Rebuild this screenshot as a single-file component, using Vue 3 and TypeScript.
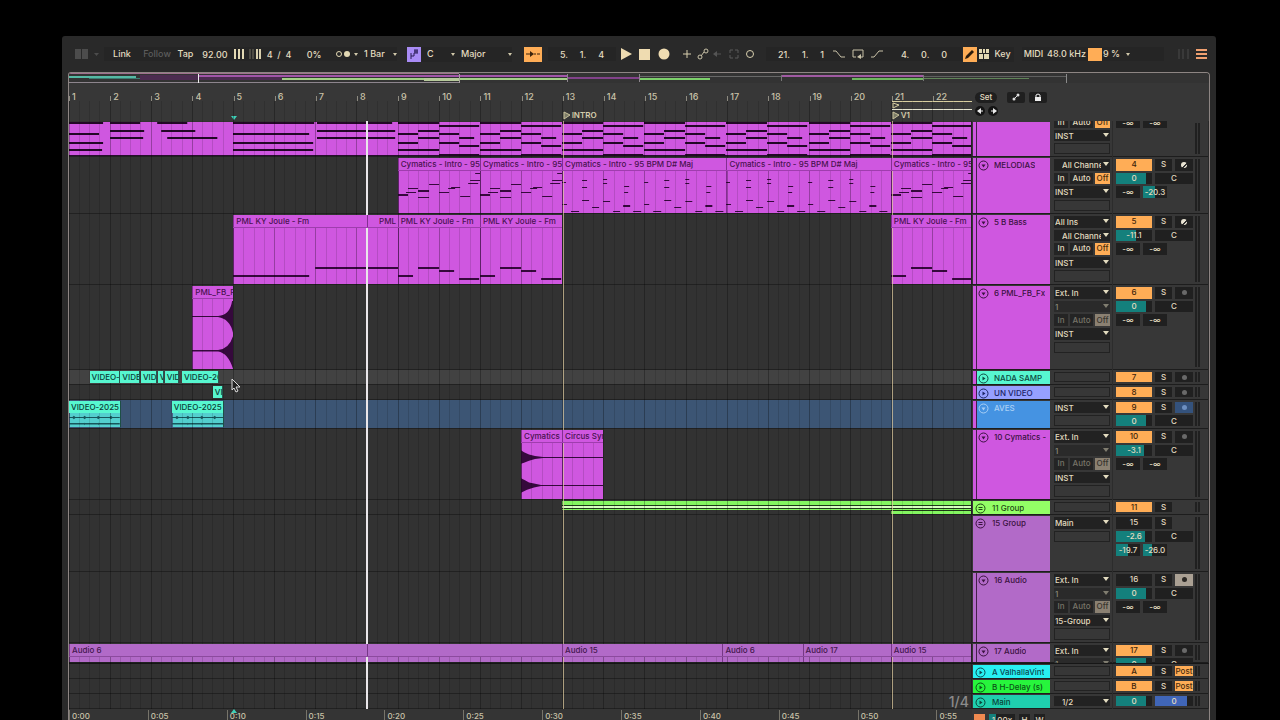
<script setup lang="ts">
type Note = [number, number, number, number?]
interface Clip { s: number; e: number; label?: string; kind?: string; notes?: Note[]; art?: string }
interface Slot { k: 'sel' | 'mon' | 'box'; t?: string; dim?: boolean; indent?: boolean }
interface Level { t: string; fill: number }
interface Track {
  name: string; slots: number; color: string; nested?: boolean; open?: string; tone?: string
  io: Slot[]; num: string; off?: boolean; rec?: string; vol?: Level; pan?: string; sends?: Level[]
  clips: Clip[]; lane?: string; cut?: string
}

const BARS = 21.95
const BAR_W = 41
const at = (bar: number): string => `${((bar - 1) / BARS) * 100}%`
const span = (bars: number): string => `${(bars / BARS) * 100}%`
const inClip = (x: number, c: Clip): string => `${(x / ((c.e - c.s) * BAR_W)) * 100}%`

const chord: Note[] = [
  [0, 41, 0], [0, 20, 11], [20, 41, 8], [0, 20, 20], [20, 41, 15], [0, 41, 27],
  [41, 81, 3], [41, 61, 11], [61, 76, 15], [41, 61, 20], [61, 81, 23], [41, 81, 32, 3]
]
const shift = (n: Note[], dx: number): Note[] => n.map(([a, b, y, h]) => [a + dx, b + dx, y, h])
const arp: Note[] = [
  [0, 10, 36], [8, 18, 34, 1], [10, 20, 30, 1], [20, 31, 32], [20, 31, 39, 1], [31, 41, 26, 1], [41, 51, 34, 1],
  [50, 57, 30, 1], [53, 62, 29, 1], [62, 72, 38, 1], [72, 82, 22, 1], [70, 80, 25, 1], [77, 82, 15, 1]
]
const pluckHalf: Note[] = [
  [0, 4, 24, 1], [0, 5, 46, 1], [9, 17, 53, 1], [20, 25, 22, 1], [20, 25, 29, 1], [20, 27, 42, 1], [30, 37, 49, 1],
  [41, 45, 21, 1], [41, 45, 25, 1], [41, 48, 43, 1], [51, 58, 53, 1], [61, 68, 47], [62, 66, 34, 1], [62, 67, 28, 1], [71, 79, 53, 1]
]
const pluck: Note[] = [...pluckHalf, ...shift(pluckHalf, 82)]
const bass: Note[] = [[0, 15, 60], [20, 41, 52], [41, 56, 55], [61, 81, 63]]

const sel = (t: string, dim = false, indent = false): Slot => ({ k: 'sel', t, dim, indent })
const mon = (dim = false): Slot => ({ k: 'mon', dim })
const box: Slot = { k: 'box' }
const inf: Level = { t: '-∞', fill: 0 }
const zero: Level = { t: '0', fill: 84 }

const tracks: Track[] = [
  {
    name: '', slots: 3, color: 'magenta', nested: true, cut: 'top', io: [mon(), sel('INST'), box],
    num: '', rec: 'main', sends: [inf, inf],
    clips: [
      { s: 1, e: 5, kind: 'bare', notes: [[0, 34, 0], [0, 30, 11], [0, 34, 20], [0, 33, 27], [41, 71, 0], [88, 118, 0], [41, 75, 8], [41, 74, 15], [92, 126, 8], [98, 148, 15]] },
      { s: 5, e: 7, kind: 'bare', notes: [[0, 81, 0], [0, 76, 11], [0, 80, 20], [0, 80, 27]] },
      { s: 7, e: 9, kind: 'bare', notes: [[1, 76, 0], [1, 79, 8], [1, 79, 15]] },
      ...[9, 11, 13, 15, 17, 19, 21].map((s): Clip => ({ s, e: s + 2, kind: 'bare', notes: chord }))
    ]
  },
  {
    name: 'MELODIAS', slots: 4, color: 'magenta', nested: true, open: 'down', io: [sel('All Channels', false, true), mon(), sel('INST'), box],
    num: '4', rec: 'midi', vol: zero, pan: 'C', sends: [inf, { t: '-20.3', fill: 48 }],
    clips: [
      { s: 9, e: 11, label: 'Cymatics - Intro - 95 BPM D# Maj', notes: arp },
      { s: 11, e: 13, label: 'Cymatics - Intro - 95 BPM D# Maj', notes: arp },
      { s: 13, e: 17, label: 'Cymatics - Intro - 95 BPM D# Maj', notes: pluck },
      { s: 17, e: 21, label: 'Cymatics - Intro - 95 BPM D# Maj', notes: pluck },
      { s: 21, e: 23, label: 'Cymatics - Intro - 95 BPM D# Maj', notes: arp }
    ]
  },
  {
    name: '5 B Bass', slots: 5, color: 'magenta', nested: true, open: 'down', io: [sel('All Ins'), sel('All Channels', false, true), mon(), sel('INST'), box],
    num: '5', rec: 'midi', vol: { t: '-11.1', fill: 56 }, pan: 'C', sends: [inf, inf],
    clips: [
      { s: 5, e: 8.25, label: 'PML KY Joule - Fm', notes: [[0, 76, 60], [82, 134, 52]] },
      { s: 8.25, e: 8.52, label: '', notes: [[0, 11, 52]] },
      { s: 8.52, e: 9, label: 'PML KY', kind: 'joined', notes: [[0, 20, 52]] },
      { s: 9, e: 11, label: 'PML KY Joule - Fm', notes: bass },
      { s: 11, e: 13, label: 'PML KY Joule - Fm', notes: bass },
      { s: 21, e: 23, label: 'PML KY Joule - Fm', notes: bass }
    ]
  },
  {
    name: '6 PML_FB_Fx', slots: 6, color: 'magenta', nested: true, open: 'down', io: [sel('Ext. In'), sel('1', true), mon(true), sel('INST'), box],
    num: '6', rec: 'dot', vol: zero, pan: 'C', sends: [inf, inf],
    clips: [{ s: 4, e: 5, label: 'PML_FB_Fx', art: 'swell' }]
  },
  {
    name: 'NADA SAMP', slots: 1, color: 'mint', nested: true, open: 'right', io: [box], num: '7', rec: 'dot', lane: 'hover',
    clips: [
      { s: 1.5, e: 2.23, label: 'VIDEO-2025', kind: 'mint' }, { s: 2.25, e: 2.73, label: 'VIDEO-2025', kind: 'mint' },
      { s: 2.75, e: 3.14, label: 'VIDEO-2025', kind: 'mint' }, { s: 3.16, e: 3.31, label: 'VIDEO', kind: 'mint' },
      { s: 3.33, e: 3.68, label: 'VIDEO', kind: 'mint' }, { s: 3.75, e: 4.64, label: 'VIDEO-2025', kind: 'mint' }
    ]
  },
  {
    name: 'UN VIDEO', slots: 1, color: 'peri', nested: true, open: 'right', io: [box], num: '8', rec: 'dot',
    clips: [{ s: 4.5, e: 4.75, label: 'VIDEO', kind: 'mint' }]
  },
  {
    name: 'AVES', slots: 2, color: 'blue', nested: true, open: 'down', tone: 'pale', io: [sel('INST'), box], num: '9', rec: 'armed',
    vol: zero, pan: 'C', lane: 'picked',
    clips: [
      { s: 1, e: 2.26, label: 'VIDEO-2025', kind: 'mint', art: 'beats' },
      { s: 3.5, e: 4.78, label: 'VIDEO-2025', kind: 'mint', art: 'beats' }
    ]
  },
  {
    name: '10 Cymatics -', slots: 5, color: 'magenta', nested: true, open: 'down', io: [sel('Ext. In'), sel('1', true), mon(true), sel('INST'), box],
    num: '10', rec: 'dot', vol: { t: '-3.1', fill: 78 }, pan: 'C', sends: [inf, inf],
    clips: [{ s: 12, e: 13, label: 'Cymatics', art: 'hit' }, { s: 13, e: 14, label: 'Circus Synth', art: 'tail' }]
  },
  {
    name: '11 Group', slots: 1, color: 'green', open: 'group', io: [box], num: '11', rec: 'none',
    clips: [{ s: 13, e: 21, kind: 'stack' }, { s: 21, e: 23, kind: 'stack tall' }]
  },
  {
    name: '15 Group', slots: 4, color: 'violet', open: 'group', io: [sel('Main'), box], num: '15', off: true, rec: 'none',
    vol: { t: '-2.6', fill: 80 }, pan: 'C', sends: [{ t: '-19.7', fill: 48 }, { t: '-26.0', fill: 36 }], clips: []
  },
  {
    name: '16 Audio', slots: 5, color: 'violet', nested: true, open: 'down', io: [sel('Ext. In'), sel('1', true), mon(true), sel('15-Group'), box],
    num: '16', off: true, rec: 'lit', vol: zero, pan: 'C', sends: [inf, inf], clips: []
  },
  {
    name: '17 Audio', slots: 2, color: 'violet', nested: true, open: 'down', cut: 'bottom', io: [sel('Ext. In'), sel('1', true)],
    num: '17', rec: 'dot', vol: zero, pan: 'C',
    clips: [
      { s: 1, e: 8.25, label: 'Audio 6', kind: 'violet' }, { s: 8.25, e: 13, label: '', kind: 'violet' },
      { s: 13, e: 16.9, label: 'Audio 15', kind: 'violet' }, { s: 16.9, e: 18.85, label: 'Audio 6', kind: 'violet' },
      { s: 18.85, e: 21, label: 'Audio 17', kind: 'violet' }, { s: 21, e: 23, label: 'Audio 15', kind: 'violet' }
    ]
  }
]

const returns: Track[] = [
  { name: 'A ValhallaVint', slots: 1, color: 'cyan', open: 'right', io: [box], num: 'A', rec: 'post', clips: [] },
  { name: 'B H-Delay (s)', slots: 1, color: 'lime', open: 'right', io: [box], num: 'B', rec: 'post', clips: [] },
  { name: 'Main', slots: 1, color: 'teal', open: 'right', io: [sel('1/2', false, true)], num: '', rec: 'main', vol: zero, clips: [] }
]
const sections = [{ id: 'tracks', rows: tracks }, { id: 'returns', rows: returns }]

const rowHeight = (t: Track): string => `${t.cut === 'top' ? 36 : t.cut === 'bottom' ? 20 : t.slots * 14 + 1}px`
const bars = Array.from({ length: 22 }, (_, i) => i + 1)
const beats = Array.from({ length: 88 }, (_, i) => 1 + i / 4)
const times = Array.from({ length: 12 }, (_, i) => ({ t: `0:${String(i * 5).padStart(2, '0')}`, bar: 1 + i * 1.917 }))
const locators = [{ bar: 13, name: 'INTRO' }, { bar: 21, name: 'V1' }]
const overview: { x: number; w: number; y: number; h: number; c: string }[] = [
  { x: 0, w: 390, y: 0, h: 1, c: '#a0708f' }, { x: 0, w: 67, y: 3, h: 2, c: '#55b9a4' }, { x: 20, w: 60, y: 5, h: 1, c: '#3c7d72' },
  { x: 71, w: 142, y: 2, h: 5, c: '#4c2c50' }, { x: 130, w: 368, y: 2, h: 2, c: '#a154a8' }, { x: 213, w: 286, y: 5, h: 2, c: '#a3cf87' },
  { x: 498, w: 72, y: 4, h: 2, c: '#82428a' }, { x: 355, w: 36, y: 5, h: 3, c: '#b7c99b' }, { x: 570, w: 71, y: 5, h: 2, c: '#7ccf6a' },
  { x: 570, w: 142, y: 3, h: 1, c: '#686868' }, { x: 712, w: 142, y: 2, h: 2, c: '#a05aa2' }, { x: 783, w: 72, y: 5, h: 2, c: '#6eb75f' },
  { x: 855, w: 105, y: 5, h: 1, c: '#608458' }, { x: 855, w: 142, y: 3, h: 1, c: '#5f5f5f' }, { x: 570, w: 1, y: 1, h: 8, c: '#8d858d' },
  { x: 498, w: 1, y: 1, h: 8, c: '#8d858d' }, { x: 712, w: 1, y: 2, h: 6, c: '#777' }, { x: 854, w: 1, y: 2, h: 6, c: '#777' },
  { x: 997, w: 1, y: 1, h: 9, c: '#8a8a8a' }, { x: 0, w: 391, y: 9, h: 1, c: '#8d858d' }, { x: 390, w: 1, y: 1, h: 9, c: '#a9a2a0' },
  { x: 129, w: 1, y: 1, h: 9, c: '#eee' }
]
</script>

<template>
  <main class="window">
    <header class="toolbar">
      <button class="cell w34 dimmed" aria-label="Browser">
        <svg width="28" height="12"><path d="M2 1h6v10H2zM9 1h6v10H9z" fill="#4c4c4c" /><path d="M21 5h5l-2.500 3z" fill="#4c4c4c" /></svg>
      </button>
      <div class="group">
        <button class="cell w36">Link</button>
        <button class="cell w34 dimmed">Follow</button>
        <button class="cell w22">Tap</button>
        <input class="cell w36" value="92.00" aria-label="Tempo" />
        <button class="cell w28" aria-label="Nudge">
          <svg width="28" height="10"><path d="M2 0v10M6 0v10M10 0v10" stroke="#e3d9b4" stroke-width="2" /><path d="M17 0v10M20 0v10" stroke="#777362" /><path d="M24 0v10M27 0v10" stroke="#d8cfae" stroke-width="2" /></svg>
        </button>
        <input class="cell w36" value="4  /  4" aria-label="Time signature" />
        <input class="cell w34" value="0%" aria-label="Groove amount" />
        <button class="cell w22" aria-label="Metronome">
          <svg width="16" height="8"><circle cx="4" cy="4" r="2.500" fill="none" stroke="#e3d9b4" /><circle cx="12" cy="4" r="3" fill="#e3d9b4" /></svg>
        </button>
        <i class="caret"></i>
        <select class="cell pick w35" aria-label="Quantization"><option>1 Bar</option></select>
        <i class="caret"></i>
      </div>
      <div class="group scale">
        <button class="cell tile purple" aria-label="Scale">
          <svg width="12" height="12"><path d="M3 11V5M3 8h3V5" stroke="#2a1d55" fill="none" /><path d="M6 3h4M7 1v4M9 1v4M6 5h4" stroke="#2a1d55" fill="none" /></svg>
        </button>
        <select class="cell pick w30" aria-label="Root note"><option>C</option></select>
        <i class="caret"></i>
        <select class="cell pick w53" aria-label="Scale name"><option>Major</option></select>
        <i class="caret"></i>
      </div>
      <button class="cell tile orange wide" aria-label="Follow playback">
        <svg width="16" height="10"><path d="M1 5h5M12 5h3M9 5h2" stroke="#3b230c" /><path d="M5 2l4 3-4 3z" fill="#3b230c" /></svg>
      </button>
      <input class="cell spot" value="5.     1.     4" aria-label="Arrangement position" />
      <div class="group plain">
        <button class="cell w18" aria-label="Play"><svg width="12" height="14"><path d="M1 1l11 6-11 6z" fill="#efdcb1" /></svg></button>
        <button class="cell w18" aria-label="Stop"><svg width="11" height="11"><path d="M0 0h11v11H0z" fill="#efdcb1" /></svg></button>
        <button class="cell w18" aria-label="Record"><svg width="12" height="12"><circle cx="6" cy="6" r="5.500" fill="#efdcb1" /></svg></button>
      </div>
      <div class="group tools">
        <button class="cell w18" aria-label="Overdub"><svg width="10" height="10"><path d="M5 1v8M1 5h8" stroke="#d8cfae" /></svg></button>
        <button class="cell w14" aria-label="Automation arm"><svg width="12" height="12"><path d="M4 8l3-4" stroke="#c9c2a8" /><circle cx="3" cy="9" r="2" fill="none" stroke="#c9c2a8" /><circle cx="9" cy="3" r="2" fill="none" stroke="#c9c2a8" /></svg></button>
        <button class="cell w14" aria-label="Re-enable automation"><svg width="10" height="10"><path d="M9 5H3" stroke="#555" /><path d="M5 2v6L1 5z" fill="#555" /></svg></button>
        <button class="cell w18" aria-label="Capture"><svg width="10" height="10"><path d="M1 4V1h3M6 1h3v3M9 6v3H6M4 9H1V6" stroke="#5a5a5a" fill="none" /></svg></button>
        <button class="cell w14" aria-label="Session record"><svg width="10" height="10"><circle cx="5" cy="5" r="3.500" fill="none" stroke="#d8cfae" /></svg></button>
      </div>
      <div class="group loop">
        <input class="cell w56" value="21.     1.     1" aria-label="Loop start" />
        <button class="cell w18" aria-label="Punch in"><svg width="12" height="8"><path d="M0 1h3l5 6h4" stroke="#c9c2a8" fill="none" /></svg></button>
        <button class="cell w18" aria-label="Loop"><svg width="12" height="10"><path d="M4 8H1V1h10v7H8" stroke="#c9c2a8" fill="none" /><path d="M9 5v5L5 8z" fill="#c9c2a8" /></svg></button>
        <button class="cell w18" aria-label="Punch out"><svg width="12" height="8"><path d="M0 7h3l5-6h4" stroke="#c9c2a8" fill="none" /></svg></button>
        <input class="cell w76" value="4.     0.     0" aria-label="Loop length" />
      </div>
      <div class="group">
        <button class="cell tile orange" aria-label="Draw mode"><svg width="12" height="12"><path d="M1 11l1-3 6-6 2 2-6 6z" fill="#2c1c0c" /></svg></button>
        <button class="cell w14" aria-label="Computer keyboard"><svg width="10" height="10"><path d="M0 0h3v4H0zM4 0h2v4H4zM7 0h3v4H7zM0 5h4v5H0zM5 5h5v5H5z" fill="#e3d9b4" /></svg></button>
        <button class="cell w22">Key</button>
      </div>
      <div class="group status">
        <button class="cell w22">MIDI</button>
        <button class="cell w43">48.0 kHz</button>
        <button class="cell cpu"><i></i>9 %</button>
        <i class="caret"></i>
      </div>
      <button class="cell menu" aria-label="Panels">
        <svg width="32" height="12"><path d="M3 1v10M7 1v10M12 1v10" stroke="#4a4a4a" /><path d="M20 2h11M20 6h11M20 10h11" stroke="#f0a070" stroke-width="2" /></svg>
      </button>
    </header>

    <section class="frame">
      <svg class="overview" viewBox="0 0 1140 10" preserveAspectRatio="none">
        <rect v-for="(o, i) in overview" :key="i" :x="o.x" :y="o.y" :width="o.w" :height="o.h" :fill="o.c" />
      </svg>

      <div class="arrange">
        <div class="head">
          <div class="ruler">
            <span v-for="b in bars" :key="b" class="bar-no" :style="{ left: at(b) }">{{ b }}</span>
            <div class="brace" :style="{ left: at(21) }"><svg width="9" height="7"><path d="M1 1l6 2-6 3z" fill="none" stroke="#d8cfa0" /></svg></div>
            <span v-for="l in locators" :key="l.name" class="locator" :style="{ left: at(l.bar) }">
              <svg width="8" height="9"><path d="M1 1l6 3-6 4z" fill="#7b7b66" stroke="#c9c29c" /></svg>{{ l.name }}
            </span>
            <i class="insert" :style="{ left: at(5) }"></i>
          </div>
          <div class="head-tools">
            <div>
              <button class="pill">Set</button>
              <button class="pill sq" aria-label="Automation mode"><svg width="8" height="8"><path d="M1 7l6-6" stroke="#ddd" /><circle cx="2" cy="6" r="1.500" fill="#ddd" /><circle cx="6" cy="2" r="1.500" fill="#ddd" /></svg></button>
              <button class="pill sq" aria-label="Lock envelopes"><svg width="8" height="8"><path d="M1 4h6v4H1z" fill="#eee" /><path d="M2 4V2q2-2 4 0v2" fill="none" stroke="#eee" /></svg></button>
            </div>
            <div>
              <button class="round" aria-label="Previous locator"><svg width="7" height="7"><path d="M6 3H2" stroke="#eee" /><path d="M4 0v6L0 3z" fill="#eee" /></svg></button>
              <button class="round" aria-label="Next locator"><svg width="7" height="7"><path d="M1 3h4" stroke="#eee" /><path d="M3 0v6l4-3z" fill="#eee" /></svg></button>
            </div>
          </div>
        </div>

        <div v-for="sec in sections" :key="sec.id" :class="sec.id">
          <div v-for="(t, ti) in sec.rows" :key="ti" class="row" :class="t.cut && 'cut-' + t.cut" :style="{ height: rowHeight(t) }">
            <div class="lane" :class="t.lane">
              <div v-for="(c, ci) in t.clips" :key="ci" class="clip" :class="[c.kind, c.art]" :style="{ left: at(c.s), width: span(c.e - c.s) }">
                <span v-if="c.label !== undefined" class="clip-head">{{ c.label }}</span>
                <svg v-if="c.notes" class="notes">
                  <rect v-for="(n, ni) in c.notes" :key="ni" :x="inClip(n[0], c)" :width="inClip(n[1] - n[0], c)" :y="n[2]" :height="n[3] || 2" />
                </svg>
                <svg v-if="c.art === 'swell'" class="wave" viewBox="0 0 41 70" preserveAspectRatio="none">
                  <path d="M0 17H26Q38 16 40 2H41V34Q38 20 26 18H0ZM0 51H26Q37 50 41 37V70Q36 54 26 52.500H0Z" />
                </svg>
                <svg v-if="c.art === 'hit'" class="wave" viewBox="0 0 41 54" preserveAspectRatio="none">
                  <path d="M0 7L3 9L8 11L14 12.500L22 13.500H41V14.500H22L14 15.500L8 17L3 19L0 20ZM0 34L4 36L8 38L13 39L20 40.500H41V41.500H20L13 43L6 45L0 48Z" />
                </svg>
                <svg v-if="c.art === 'tail'" class="wave" viewBox="0 0 41 54" preserveAspectRatio="none"><path d="M0 13.500H41V14.500H0ZM0 40.500H41V41.500H0Z" /></svg>
                <svg v-if="c.art === 'beats'" class="wave" viewBox="0 0 52 15" preserveAspectRatio="none">
                  <path d="M0 3.500H52V4.500H0ZM0 10.500H52V12H0ZM3 4l2-2 2 2-2 2zM14 4l2-2 2 2-2 2zM28 4l2-2 2 2-2 2zM41 4l2-2 2 2-2 2zM15 11l1-1 1 1-1 2zM29 11l1-1 1 1-1 2z" />
                </svg>
              </div>
            </div>

            <div class="title" :class="[t.color, t.tone, { nested: t.nested }]">
              <button v-if="t.name" class="fold" :aria-label="'Fold ' + t.name">
                <svg width="11" height="11" fill="none" stroke="currentColor">
                  <circle cx="5.500" cy="5.500" r="4.500" />
                  <path v-if="t.open === 'down'" d="M3.500 4.500h4l-2 3z" fill="currentColor" stroke="none" />
                  <path v-else-if="t.open === 'right'" d="M4.500 3.500v4l3-2z" fill="currentColor" stroke="none" />
                  <path v-else d="M3.500 4.500h4M3.500 6.500h4" />
                </svg>
              </button>
              <span>{{ t.name }}</span>
            </div>

            <div class="io" :style="{ '--n': t.slots }">
              <template v-for="(s, si) in t.io" :key="si">
                <div v-if="s.k === 'sel'" class="chooser" :class="{ dim: s.dim, indent: s.indent }">
                  <select :aria-label="t.name + ' routing ' + (si + 1)"><option>{{ s.t }}</option></select>
                </div>
                <div v-else-if="s.k === 'mon'" class="monitor" :class="{ dim: s.dim }">
                  <button>In</button><button>Auto</button><button class="on">Off</button>
                </div>
                <div v-else class="box"></div>
              </template>
            </div>

            <div class="mixer" :style="{ '--n': t.slots }">
              <div v-if="t.rec !== 'main'" class="mix-row">
                <button class="active" :class="{ off: t.off }">{{ t.num }}</button>
                <button class="solo">S</button>
                <button v-if="t.rec === 'post'" class="post">Post</button>
                <button v-else-if="t.rec !== 'none'" class="rec" :class="t.rec" :aria-label="'Arm ' + t.name"><i></i></button>
              </div>
              <div v-if="t.vol" class="mix-row">
                <input class="vol" :value="t.vol.t" :style="{ '--fill': t.vol.fill + '%' }" :aria-label="t.name + ' volume'" />
                <input v-if="t.pan" class="pan" :value="t.pan" :aria-label="t.name + ' pan'" />
                <input v-else class="vol cue" value="0" :style="{ '--fill': '84%' }" aria-label="Cue volume" />
              </div>
              <div v-if="t.sends" class="mix-row sends">
                <input v-for="(s, si) in t.sends" :key="si" :value="s.t" :style="{ '--fill': s.fill + '%' }" :aria-label="t.name + ' send ' + (si + 1)" />
              </div>
            </div>
            <div class="meter"><i></i><i></i></div>
          </div>
        </div>

        <footer class="foot">
          <div class="clock"><span v-for="t in times" :key="t.t" :style="{ left: at(t.bar) }">{{ t.t }}</span><i class="insert" :style="{ left: at(5) }"></i></div>
          <div class="zoomers">
            <button class="warm" aria-label="Tempo leader"></button><input value="1.00x" aria-label="Zoom" /><button>H</button><button>W</button>
          </div>
        </footer>

        <div class="overlay">
          <svg class="grid">
            <line v-for="b in beats" :key="b" :x1="at(b)" :x2="at(b)" y1="0" y2="100%" :class="{ bar: Number.isInteger(b) }" />
          </svg>
          <i v-for="l in locators" :key="l.name" class="rule" :style="{ left: at(l.bar) }"></i>
          <i class="playhead" :style="{ left: at(8.25) }"></i>
          <svg class="cursor" :style="{ left: at(4.93) }" width="10" height="15"><path d="M1 1v11l2-2 2 4 2-1-2-4h4z" fill="#222" stroke="#ddd" /></svg>
          <span class="division">1/4</span>
        </div>
      </div>
    </section>
  </main>
</template>

<style>
html, body { margin: 0; background: #000; }
</style>

<style scoped>
.window {
  box-sizing: border-box; height: calc(100vh - 36px); margin: 36px 64px 0 62px; overflow: hidden;
  display: flex; flex-direction: column; background: #292929; color: #e3dcc0;
  font: 500 8px/12px Inter, "Liberation Sans", sans-serif; border-radius: 3px 3px 0 0;
}
button, input, select {
  font: inherit; color: inherit; border: 0; border-radius: 0; padding: 0; margin: 0; background: none;
  appearance: none; min-width: 0; box-sizing: border-box; text-align: center; outline: 0;
}
.toolbar { flex: 0 0 36px; display: flex; align-items: center; padding: 0 8px; font-size: 9px; white-space: pre; }
.group { display: flex; align-items: center; background: #252525; }
.cell { display: flex; align-items: center; justify-content: center; height: 14px; flex: none; white-space: pre; }
.dimmed { color: #5c5c5c; }
.w14 { width: 14px; } .w18 { width: 19px; } .w22 { width: 23px; } .w28 { width: 28px; } .w30 { width: 30px; }
.w34 { width: 34px; } .w35 { width: 35px; } .w36 { width: 36px; } .w43 { width: 43px; } .w53 { width: 53px; }
.w56 { width: 56px; } .w76 { width: 76px; }
.pick { text-align: left; padding-left: 6px; }
.caret { width: 0; border: 2px solid transparent; border-top: 3px solid #d0c8aa; border-bottom: 0; }
.scale { margin-left: 10px; }
.tile { width: 14px; height: 15px; }
.wide { width: 18px; margin-left: 12px; }
.purple { background: #a98cf5; }
.orange { background: #ffad56; }
.spot { margin-left: 6px; width: 68px; background: #252525; }
.tools { margin-left: 4px; }
.plain, .tools { background: none; }
.loop { margin: 0 1px 0 9px; padding-left: 7px; }
.status { margin-left: 8px; flex: 0 1 142px; }
.cpu { width: 32px; justify-content: flex-start; margin-right: 6px; }
.cpu i { width: 14px; height: 13px; margin-right: 1px; background: #ffad56; }
.menu { margin-left: auto; }

.frame { flex: 1; min-height: 0; margin: 0 6px; border: 1px solid #8d8583; border-bottom: 0; border-radius: 3px 4px 0 0; background: #373737; overflow: hidden; }
.overview { display: block; width: 100%; height: 10px; background: #333; }
.arrange { position: relative; }
.head, .foot { display: grid; grid-template-columns: minmax(0, 1fr) 237px; }
.head { height: 38px; }
.ruler, .clock { position: relative; }
.ruler { overflow: hidden; }
.bar-no { position: absolute; top: 9px; height: 9px; padding-left: 3px; font-size: 9px; line-height: 10px; color: #c9c2a8; }
.bar-no::before { content: ""; position: absolute; left: 0; top: 4px; height: 5px; border-left: 1px solid #8d8a80; }
.brace { position: absolute; top: 18px; right: 0; height: 7px; border-top: 1px solid #d8cfa0; border-bottom: 1px solid #e5e5d0; background: #3a3a3a; }
.brace svg, .locator svg { display: block; }
.locator { position: absolute; bottom: 0; display: flex; align-items: center; gap: 1px; color: #d8cfae; font-weight: 600; }
.insert { position: absolute; bottom: 1px; margin-left: -3px; width: 0; border: 3px solid transparent; border-top: 4px solid #3fd0b8; border-bottom: 0; }
.head-tools { padding: 7px 0 0 3px; font-size: 8px; }
.head-tools > div { display: flex; gap: 3px; height: 14px; align-items: center; }
.pill { height: 11px; width: 22px; border-radius: 6px; background: #1f1f1f; line-height: 11px; }
.pill.sq { width: 18px; border-radius: 2px; display: grid; place-items: center; }
.pill + .sq { margin-left: 7px; }
.sq + .sq { margin-left: 1px; }
.round { width: 10px; height: 10px; border-radius: 50%; background: #141414; display: grid; place-items: center; }

.tracks { border-bottom: 1px solid #161616; }
.row { display: grid; grid-template-columns: minmax(0, 1fr) 79px 62px 82px 14px; grid-template-rows: minmax(0, 1fr); overflow: hidden; box-shadow: inset 0 -1px #1d1d1d; }
.lane { position: relative; overflow: hidden; background: #323232; border-bottom: 1px solid #212121; border-right: 1px solid #262026; }
.lane.hover { background: #424242; }
.lane.picked { background: #3c5574; }
.clip { position: absolute; top: 1px; bottom: 0; overflow: hidden; background: #cf57e0; color: #48124f; box-shadow: inset 1px 0 rgba(70, 15, 80, .55); }
.clip-head { position: relative; z-index: 2; display: block; height: 12px; padding-left: 3px; border-bottom: 1px solid rgba(70, 15, 80, .35); background: #cf57e0; white-space: nowrap; overflow: hidden; box-shadow: inset 1px 0 rgba(70, 15, 80, .55); }
.clip.bare { box-shadow: inset 0 -1px #2a0c30; }
.clip.joined, .joined .clip-head { box-shadow: none; }
.joined .clip-head { padding-left: 1px; }
.notes { position: absolute; inset: 0; width: 100%; height: 100%; fill: #35093c; }
.bare .notes { fill: #220726; }
.wave { position: absolute; left: 0; top: 13px; width: 100%; height: calc(100% - 13px); fill: #35093c; }
.mint { color: #0c4038; background: #57f7d0; }
.clip.mint { bottom: 1px; right: auto; border-right: 1px solid #225a50; box-sizing: border-box; }
.mint .clip-head { padding-left: 2px; background: #57f7d0; box-shadow: none; border: 0; }
.clip.mint.beats { background: #53cfce; }
.beats .wave { fill: #17565c; }
.clip.violet { background: #b26ac8; color: #42164d; }
.clip.violet .clip-head { background: #b26ac8; }
.clip.stack { box-shadow: none; bottom: 4px; background: linear-gradient(#83f560 4px, #1e3618 4px 5px, #d7ffc0 5px 7px, #1e3618 7px 8px, #83f560 8px); }
.clip.stack.tall { bottom: 0; background: linear-gradient(#83f560 4px, #1e3618 4px 5px, #d7ffc0 5px 7px, #1e3618 7px 8px, #83f560 8px 9px, #1e3618 9px 10px, #83f560 10px); }

.title { position: relative; display: flex; align-items: flex-start; gap: 6px; margin: 1px; padding: 1px 3px 0 2px; overflow: hidden; white-space: nowrap; color: #3a123f; }
.title span { overflow: hidden; }
.title.nested { gap: 5px; padding-left: 5px; }
.title.nested::before { content: ""; position: absolute; left: 3px; top: 0; bottom: 0; width: 1px; background: #43204a; }
.title.nested.mint, .title.nested.peri, .title.nested.blue { box-shadow: inset 3px 0 #cf57e0; }
.fold { flex: none; height: 12px; width: 11px; color: inherit; }
.fold svg { display: block; }
.magenta { background: #cf57e0; }
.peri { background: #96a0ff; color: #1b2466; }
.title.mint { color: #0d4a42; }
.blue { background: #4593e2; }
.title.pale { color: #a9cff5; }
.green { background: #93ff66; color: #1f4a14; }
.violet { background: #b26ac8; }
.cyan { background: #27f0f2; color: #0c4a52; }
.lime { background: #27f53c; color: #0b5216; }
.teal { background: #1fcfae; color: #0a4439; }

.io, .mixer { display: grid; grid-template-rows: repeat(var(--n), minmax(0, 1fr)); padding: 1px 0 2px; }
.io { padding-left: 3px; padding-right: 2px; border-right: 1px solid #2c2c2c; }
.cut-top .io, .cut-top .mixer, .cut-bottom .io, .cut-bottom .mixer { grid-template-rows: repeat(var(--n), 13px); }
.cut-top .io, .cut-top .mixer { align-content: end; }
.chooser { position: relative; margin: 1px 0; background: #222; overflow: hidden; }
.chooser select { display: block; width: 100%; height: 100%; padding: 0 9px 0 1px; text-align: left; overflow: hidden; }
.chooser.indent select { padding-left: 8px; }
.chooser::after { content: ""; position: absolute; right: 1px; top: 3px; border: 3px solid transparent; border-top: 4px solid #e3dcc0; border-bottom: 0; pointer-events: none; }
.chooser.dim { color: #8b8878; background: #2a2a2a; }
.chooser.dim::after { border-top-color: #807d70; }
.monitor { display: grid; grid-template-columns: 14px 23px 15px; gap: 2px; margin: 1px 0; }
.monitor button { background: #242424; line-height: 11px; overflow: hidden; }
.monitor .on { background: #ffad56; color: #4a2c0c; }
.monitor.dim { color: #777468; }
.monitor.dim .on { background: #8b8172; color: #37332d; }
.box { margin: 1px 0; border: 1px solid #222; }
.mixer { padding-left: 3px; }
.mix-row { display: grid; grid-template-columns: 36px 17px 18px; gap: 3px; margin: 1px 0; line-height: 11px; }
.mix-row > * { width: 100%; height: 100%; overflow: hidden; line-height: 11px; }
.active { background: #ffad56; color: #3d240a; }
.active.off { background: #202020; color: #e3dcc0; }
.solo, .rec, .pan { background: #202020; }
.pan { grid-column: span 2; }
.rec { display: grid; place-items: center; }
.rec i { width: 5px; height: 5px; border-radius: 50%; background: #696969; }
.rec.midi i { background: linear-gradient(135deg, #e8e3d2 55%, #333 55% 70%, #e8e3d2 70%); width: 6px; height: 6px; }
.rec.armed { background: #34527c; }
.rec.armed i { background: #6d8fc0; }
.rec.lit { background: #aaa093; }
.rec.lit i { background: #2b2824; }
.post { background: #ffad56; color: #4a2c0c; }
.vol, .sends input { background: linear-gradient(90deg, #14807c var(--fill), #202020 var(--fill)); }
.cue { grid-column: span 2; background: linear-gradient(90deg, #4066b8 var(--fill), #202020 var(--fill)); }
.sends { grid-template-columns: 24px 24px; }
.meter { display: flex; gap: 1px; padding: 2px 8px 3px 0; border-right: 1px solid #292929; }
.meter i { flex: 1; background: #202020; }

.foot { height: 24px; }
.clock { overflow: hidden; color: #c9c2a8; background: #343434; }
.clock span { position: absolute; top: 1px; padding-left: 2px; border-left: 1px solid #77746a; }
.clock .insert { bottom: auto; top: 0; border-top: 0; border-bottom: 4px solid #3fd0b8; }
.zoomers { display: flex; gap: 4px; padding: 5px 0 0 2px; }
.zoomers > * { height: 12px; width: 11px; background: #202020; }
.zoomers .warm { background: #f08a50; }
.zoomers input { width: 26px; background: linear-gradient(90deg, #14807c 7px, #202020 7px); }
.overlay { position: absolute; z-index: 1; inset: 18px 237px 24px 0; overflow: hidden; pointer-events: none; }
.grid { display: block; width: 100%; height: 100%; stroke: rgba(0, 0, 0, .12); shape-rendering: crispEdges; }
.grid .bar { stroke: rgba(0, 0, 0, .28); }
.rule { position: absolute; z-index: 3; top: 20px; bottom: 0; width: 1px; background: rgba(225, 205, 160, .7); }
.playhead { position: absolute; top: 20px; bottom: 0; width: 2px; margin-left: -1px; background: #e9e6ea; }
.cursor { position: absolute; top: 277px; }
.division { position: absolute; right: 3px; bottom: 0; font-size: 14px; line-height: 14px; color: #8b8b8b; }
</style>
